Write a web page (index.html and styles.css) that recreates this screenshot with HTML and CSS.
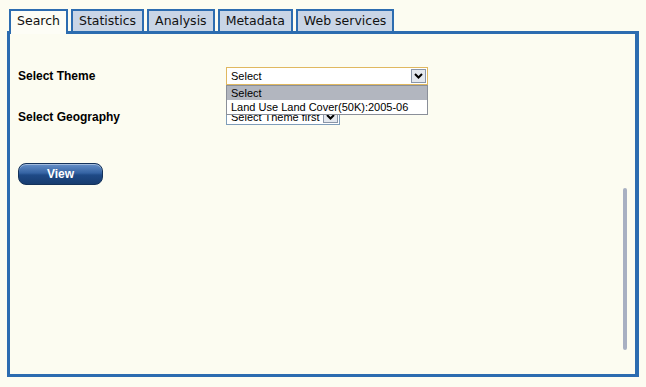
FILE: index.html
```html
<!DOCTYPE html>
<html lang="en">
<head>
    <meta charset="UTF-8">
    <title>Search</title>
    <link rel="stylesheet" href="styles.css">
</head>
<body>
    <div class="wrap">
        <ul class="tabs">
            <li class="tab active">Search</li>
            <li class="tab">Statistics</li>
            <li class="tab">Analysis</li>
            <li class="tab">Metadata</li>
            <li class="tab">Web services</li>
        </ul>

        <div class="panel">
            <div class="form-row">
                <label>Select Theme</label>
                <div class="combo">
                    <div class="select focus">
                        <span>Select</span>
                        <span class="arrow"><svg width="9" height="6" viewBox="0 0 9 6"><path d="M1 1 L4.5 4.5 L8 1" fill="none" stroke="#000" stroke-width="2"/></svg></span>
                    </div>
                    <ul class="options">
                        <li class="hl">Select</li>
                        <li>Land Use Land Cover(50K):2005-06</li>
                    </ul>
                </div>
            </div>

            <div class="form-row geo">
                <label>Select Geography</label>
                <div class="select small">
                    <span>Select Theme first</span>
                    <span class="arrow"><svg width="9" height="6" viewBox="0 0 9 6"><path d="M1 1 L4.5 4.5 L8 1" fill="none" stroke="#000" stroke-width="2"/></svg></span>
                </div>
            </div>

            <button class="view-btn">View</button>

            <div class="thumb"></div>
        </div>
    </div>
</body>
</html>
```

FILE: styles.css
```css
* {
    margin: 0;
    padding: 0;
    box-sizing: border-box;
}

body {
    background: #fcfcf1;
    font-family: "Liberation Sans", Arial, sans-serif;
    color: #000;
}

.wrap {
    padding: 9px 0 0 7px;
    width: 639px;
}

.tabs {
    list-style: none;
    display: flex;
    gap: 3px;
    margin-left: 2px;
    position: relative;
    z-index: 2;
}

.tab {
    font-family: "DejaVu Sans", Verdana, sans-serif;
    font-size: 12.5px;
    height: 22px;
    line-height: 19px;
    padding: 0 6px;
    border: 2px solid #2c6cb0;
    border-bottom: none;
    background: #c9d5e6;
    color: #111;
}

.tab.active {
    background: #fdfdf6;
    height: 25px;
    margin-bottom: -3px;
}

.panel {
    position: relative;
    border: 3px solid #2c6cb0;
    border-right-width: 4px;
    height: 346px;
    padding: 33px 8px 0 8px;
    background: #fcfcf1;
}

.form-row {
    display: flex;
    align-items: center;
    height: 18px;
}

.form-row label {
    width: 208px;
    font-size: 12px;
    font-weight: bold;
}

.form-row.geo {
    margin-top: 24px;
    height: 16px;
}

.combo {
    position: relative;
    z-index: 3;
}

.select {
    display: flex;
    align-items: center;
    justify-content: space-between;
    width: 202px;
    height: 18px;
    border: 1px solid #7f9db9;
    background: #fff;
    font-size: 11px;
    padding-left: 4px;
    padding-right: 1px;
}

.select.focus {
    border-color: #e0b860;
}

.select.small {
    width: 114px;
    height: 16px;
}

.arrow {
    width: 15px;
    height: 14px;
    border: 1px solid #8a96a8;
    background: #e4e8ee;
    display: flex;
    align-items: center;
    justify-content: center;
}

.select.small .arrow {
    height: 12px;
}

.options {
    position: absolute;
    top: 18px;
    left: 0;
    width: 202px;
    list-style: none;
    background: #fff;
    border: 1px solid #8a8f99;
    font-size: 11px;
}

.options li {
    height: 14px;
    line-height: 14px;
    padding-left: 4px;
}

.options li.hl {
    background: #b2b6bf;
}

.view-btn {
    display: block;
    margin-top: 38px;
    width: 85px;
    height: 22px;
    border: 1px solid #14325a;
    border-radius: 8px;
    background: linear-gradient(#6690c8, #3563a3 45%, #1f4a86 55%, #173c70);
    box-shadow: inset 0 1px 0 rgba(255,255,255,0.4);
    color: #fff;
    font-family: "Liberation Sans", Arial, sans-serif;
    font-weight: bold;
    font-size: 12px;
}

.thumb {
    position: absolute;
    right: 8px;
    top: 154px;
    width: 4px;
    height: 162px;
    border-radius: 2px;
    background: #a8b0c2;
}
```
